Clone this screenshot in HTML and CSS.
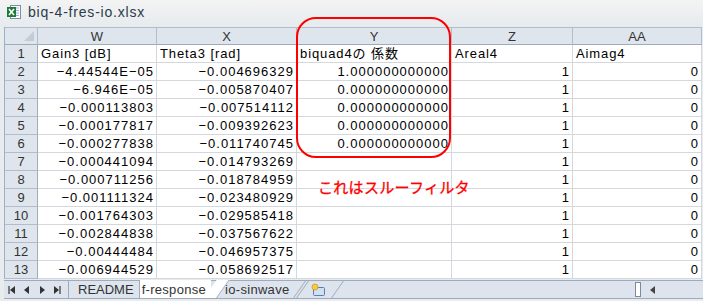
FILE: index.html
```html
<!DOCTYPE html>
<html>
<head>
<meta charset="utf-8">
<link rel="stylesheet" href="styles.css">
</head>
<body>
<div class="win">
  <div class="title">
    <svg class="xicon" width="16" height="16" viewBox="0 0 16 16">
      <rect x="4.5" y="1.5" width="10" height="13" fill="#fff" stroke="#7f8fa6"/>
      <path d="M7 4h6M7 6.5h6M7 9h6M7 11.5h6" stroke="#8fb5de" stroke-width="1"/>
      <rect x="1" y="3" width="9" height="10" fill="#1f7a3a"/>
      <path d="M3 5l5 6M8 5l-5 6" stroke="#fff" stroke-width="1.6"/>
    </svg>
    <span class="fname">biq-4-fres-io.xlsx</span>
  </div>
  <div class="sheet">
    <div class="grid">
      <div class="h corner"><span class="tri"></span></div>
      <div class="h">W</div><div class="h">X</div><div class="h">Y</div><div class="h">Z</div><div class="h">AA</div>

      <div class="rn">1</div><div class="c l">Gain3 [dB]</div><div class="c l">Theta3 [rad]</div><div class="c l">biquad4の 係数</div><div class="c l">Areal4</div><div class="c l">Aimag4</div>
      <div class="rn">2</div><div class="c">−4.44544E−05</div><div class="c">−0.004696329</div><div class="c">1.000000000000</div><div class="c">1</div><div class="c">0</div>
      <div class="rn">3</div><div class="c">−6.946E−05</div><div class="c">−0.005870407</div><div class="c">0.000000000000</div><div class="c">1</div><div class="c">0</div>
      <div class="rn">4</div><div class="c">−0.000113803</div><div class="c">−0.007514112</div><div class="c">0.000000000000</div><div class="c">1</div><div class="c">0</div>
      <div class="rn">5</div><div class="c">−0.000177817</div><div class="c">−0.009392623</div><div class="c">0.000000000000</div><div class="c">1</div><div class="c">0</div>
      <div class="rn">6</div><div class="c">−0.000277838</div><div class="c">−0.011740745</div><div class="c">0.000000000000</div><div class="c">1</div><div class="c">0</div>
      <div class="rn">7</div><div class="c">−0.000441094</div><div class="c">−0.014793269</div><div class="c"></div><div class="c">1</div><div class="c">0</div>
      <div class="rn">8</div><div class="c">−0.000711256</div><div class="c">−0.018784959</div><div class="c"></div><div class="c">1</div><div class="c">0</div>
      <div class="rn">9</div><div class="c">−0.001111324</div><div class="c">−0.023480929</div><div class="c"></div><div class="c">1</div><div class="c">0</div>
      <div class="rn">10</div><div class="c">−0.001764303</div><div class="c">−0.029585418</div><div class="c"></div><div class="c">1</div><div class="c">0</div>
      <div class="rn">11</div><div class="c">−0.002844838</div><div class="c">−0.037567622</div><div class="c"></div><div class="c">1</div><div class="c">0</div>
      <div class="rn">12</div><div class="c">−0.00444484</div><div class="c">−0.046957375</div><div class="c"></div><div class="c">1</div><div class="c">0</div>
      <div class="rn">13</div><div class="c">−0.006944529</div><div class="c">−0.058692517</div><div class="c"></div><div class="c">1</div><div class="c">0</div>
    </div>
    <div class="ring"></div>
    <div class="note">これはスルーフィルタ</div>
  </div>
  <div class="tabbar">
    <div class="nav">
      <svg width="60" height="14" viewBox="0 0 60 14">
        <path d="M5 3v8" stroke="#333" stroke-width="1.2"/><path d="M11 3l-5 4 5 4z" fill="#333"/>
        <path d="M25 3l-5 4 5 4z" fill="#333"/>
        <path d="M36 3l5 4-5 4z" fill="#333"/>
        <path d="M50 3l5 4-5 4z" fill="#333"/><path d="M56 3v8" stroke="#333" stroke-width="1.2"/>
      </svg>
    </div>
    <div class="tab first">README</div>
    <div class="tab active">f-response</div>
    <div class="tab slant">io-sinwave</div>
    <div class="tab slant newt">
      <svg width="18" height="14" viewBox="0 0 18 14">
        <rect x="3.5" y="4.5" width="11" height="8" rx="1" fill="#cfe0f3" stroke="#5a7fae"/>
        <circle cx="5" cy="4" r="3" fill="#f7c948" stroke="#d69a1a" stroke-width="0.8"/>
      </svg>
    </div>
    <div class="hscroll">
      <div class="split"></div>
      <svg class="larr" width="8" height="10" viewBox="0 0 8 10"><path d="M6 1l-5 4 5 4z" fill="#444"/></svg>
    </div>
  </div>
</div>
</body>
</html>
```

FILE: styles.css
```css
html, body { margin: 0; padding: 0; }
body {
  width: 703px; height: 301px; overflow: hidden;
  background: #e9ecef;
  font-family: "Liberation Sans", "Noto Sans CJK JP", sans-serif;
}
.win { width: 703px; height: 301px; display: flex; flex-direction: column; }
.title {
  height: 27px; box-sizing: border-box;
  display: flex; align-items: center; gap: 6px; padding: 0 0 3px 6px;
  background: linear-gradient(#f3f3f3, #e6ebee);
  font-size: 14px; color: #2b3a4a; letter-spacing: 0.8px;
}
.xicon { flex: none; }
.sheet { position: relative; padding-left: 4px; height: 253px; background: #e9ecef; }
.grid {
  display: grid;
  grid-template-columns: 33px 119px 140px 155px 121px 129px;
  grid-auto-rows: 18px;
  background: #fff;
  border-left: 1px solid #9eb0c5;
  width: 697px;
  box-sizing: border-box;
}
.grid > div {
  box-sizing: border-box;
  border-right: 1px solid #d4d7db;
  border-bottom: 1px solid #d4d7db;
  font-size: 13px; line-height: 17px;
  white-space: nowrap; overflow: visible;
  color: #000;
}
.grid > .h {
  background: #dfe5ed; color: #333; text-align: center;
  border-right: 1px solid #b3bccb; border-bottom: 1px solid #9eabbb;
  border-top: 1px solid #b3bccb;
}
.grid > .corner { position: relative; }
.tri {
  position: absolute; right: 3px; bottom: 3px;
  width: 0; height: 0;
  border-left: 10px solid transparent; border-bottom: 10px solid #c4cbd4;
}
.grid > .rn {
  background: #dfe5ed; color: #333; text-align: center;
  border-right: 1px solid #9eabbb; border-bottom: 1px solid #b3bccb;
}
.grid > .c { text-align: right; padding-right: 2px; letter-spacing: 1px; }
.grid > .c.l { text-align: left; padding-left: 3px; letter-spacing: 0.9px; }
.ring {
  position: absolute; left: 296px; top: -10px;
  width: 155px; height: 141px; box-sizing: border-box;
  border: 2px solid #ff0000; border-radius: 20px;
}
.note {
  position: absolute; left: 318px; top: 150px;
  font-family: "Noto Sans CJK JP", sans-serif;
  font-size: 15px; line-height: 20px; color: #f00; letter-spacing: 0.3px;
  -webkit-text-stroke: 0.3px #f00;
}
.tabbar {
  height: 17px; display: flex; align-items: stretch;
  background: #dde4ee; border-top: 1px solid #9eabbb; border-bottom: 1px solid #9eabbb;
  margin-left: 4px; font-size: 13px; color: #333;
}
.nav { width: 64px; display: flex; align-items: center; }
.tab {
  position: relative;
  display: flex; align-items: center; box-sizing: border-box;
  line-height: 16px; letter-spacing: 0.3px;
}
.tab.first {
  border-left: 1px solid #9eabbb; border-right: 1px solid #9eabbb;
  background: #dde4ee; padding: 0 5px 0 9px; letter-spacing: 0;
}
.tab.active { padding: 0 11px 0 2px; z-index: 2; }
.tab.active::before {
  content: ""; position: absolute; left: 0; right: 6px; top: -1px; bottom: 0;
  background: #fff; z-index: -1;
}
.tab.active::after {
  content: ""; position: absolute; right: 0; width: 12px; top: -1px; bottom: 0;
  background: #fff; transform: skewX(-35deg); transform-origin: bottom left;
  border-right: 1px solid #9eabbb; z-index: -1;
}
.tab.slant { padding: 0 11px 0 8px; }
.tab.slant::before {
  content: ""; position: absolute; left: 0; right: 0; top: 0; bottom: 0;
  border-left: 1px solid #9eabbb; border-right: 1px solid #9eabbb;
  transform: skewX(-35deg); z-index: 0;
}
.tab.newt { padding: 0 10px 0 8px; margin-left: 2px; }
.hscroll { flex: 1; margin-left: 18px; position: relative; display: flex; align-items: center; padding-left: 279px; gap: 8px; }
.split { width: 4px; height: 13px; background: #fff; border: 1px solid #7b8a9c; }
.larr { flex: none; }
```
